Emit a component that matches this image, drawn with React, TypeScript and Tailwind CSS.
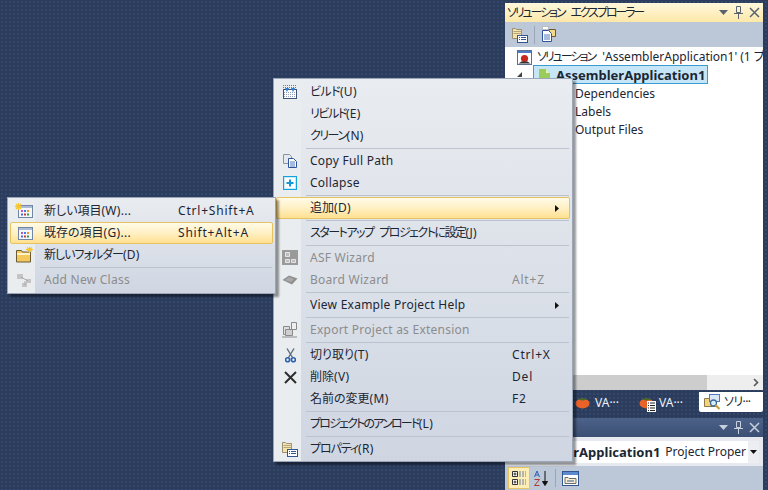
import React from "react";

const uiFont = "font-['Noto_Sans','Noto_Sans_CJK_JP',sans-serif] [font-feature-settings:'palt']";

const BuildIcon = () => (
  <svg width="16" height="16" viewBox="0 0 16 16">
    <path d="M1 1.500h14M1 3.500h14" stroke="#6f7d93" strokeWidth="1" strokeDasharray="1 1" />
    <rect x="1.500" y="5.500" width="13" height="9" fill="#fff" stroke="#3f5577" />
    <path d="M2 8.500h12M2 10.500h12M2 12.500h12" stroke="#8fa0b8" strokeDasharray="1 1" />
    <path d="M3 4h4L5 8zM9 4h4l-2 4z" fill="#2c7fd8" />
  </svg>
);

const CopyIcon = () => (
  <svg width="16" height="16" viewBox="0 0 16 16">
    <path d="M1.500 1.500h6l2 2v7h-8z" fill="#e4e8ef" stroke="#8a93a3" />
    <path d="M6.500 5.500h5l3 3v6h-8z" fill="#fff" stroke="#2f549b" />
    <path d="M8 9h5M8 11h5M8 13h5" stroke="#4f78bd" />
  </svg>
);

const CopyPageIcon = () => (
  <svg width="16" height="17" viewBox="0 0 16 17">
    <path d="M1.500 0.500h6v3h-6z" fill="#fff" stroke="#9a9a9a" strokeDasharray="1 1" />
    <path d="M8 3.500h6.500v7H8z" fill="#f3d98a" stroke="#6b5a32" />
    <path d="M1.500 4.500h6l3 3v8h-9z" fill="#fff" stroke="#2f549b" />
    <path d="M3 9h6M3 11h6M3 13h6" stroke="#4f78bd" />
  </svg>
);

const CollapseIcon = () => (
  <svg width="14" height="14" viewBox="0 0 14 14">
    <rect x="0.500" y="0.500" width="13" height="13" fill="#fff" stroke="#12a3dc" />
    <rect x="1.500" y="1.500" width="11" height="11" fill="none" stroke="#c6e9f7" />
    <path d="M7 3.500v7M3.500 7h7" stroke="#1599d4" strokeWidth="2" />
  </svg>
);

const AsfIcon = () => (
  <svg width="16" height="16" viewBox="0 0 16 16">
    <rect x="0" y="0" width="16" height="15" fill="#9a9a9a" />
    <path d="M3.500 2.500h4v4h-4zM3.500 9.500h4v3h-4zM9.500 9.500h4v3h-4z" fill="#bdbdbd" stroke="#e6e6e6" />
  </svg>
);

const BoardIcon = () => (
  <svg width="16" height="10" viewBox="0 0 16 10">
    <path d="M0.500 5L7 0.500L15.500 3.500L10 9.500z" fill="#8f8f8f" />
    <path d="M3 5l4-3 5 2-3 3z" fill="#a9a9a9" />
  </svg>
);

const ExportIcon = () => (
  <svg width="16" height="16" viewBox="0 0 16 16">
    <path d="M1.500 4.500h6v8h-6z" fill="#dedede" stroke="#8a8a8a" />
    <path d="M3.500 7.500h7v6h-7z" fill="#cfcfcf" stroke="#8a8a8a" />
    <path d="M9.500 0.500h5v7h-5z" fill="#eeeeee" stroke="#8a8a8a" />
    <path d="M0 15h15" stroke="#8a8a8a" />
  </svg>
);

const CutIcon = () => (
  <svg width="11" height="15" viewBox="0 0 11 15">
    <path d="M2 0.500L7.500 9.500M9 0.500L3.500 9.500" stroke="#5f6b7c" strokeWidth="1.400" />
    <circle cx="2.600" cy="11.800" r="2" fill="none" stroke="#2a5fb0" strokeWidth="1.600" />
    <circle cx="8.400" cy="11.800" r="2" fill="none" stroke="#2a5fb0" strokeWidth="1.600" />
  </svg>
);

const DeleteIcon = () => (
  <svg width="13" height="13" viewBox="0 0 13 13">
    <path d="M1 1l11 11M12 1L1 12" stroke="#2d2d2d" strokeWidth="2" />
  </svg>
);

const PropsIcon = () => (
  <svg width="16" height="16" viewBox="0 0 16 16" className="shrink-0">
    <path d="M0.500 1.500h3l1 1h5v9h-9z" fill="#f4e2ac" stroke="#9b8f72" />
    <path d="M1.500 4.500h8M1.500 6.500h8" stroke="#b5a67e" />
    <rect x="5.500" y="8.500" width="10" height="7" fill="#fff" stroke="#34568f" />
    <path d="M7 10.500h1M9 10.500h5M7 12.500h1M9 12.500h5" stroke="#34568f" />
  </svg>
);

const ItemIcon = ({ star }: { star?: boolean }) => (
  <svg width="18" height="16" viewBox="0 0 18 16">
    <rect x="3.500" y="2.500" width="14" height="12" fill="#f5f7fa" stroke="#7286a5" />
    <rect x="4" y="3" width="13" height="2" fill="#a9bbd6" />
    <path d="M6 7h2v2H6z" fill="#c94fc0" />
    <path d="M9 7h2v2H9z" fill="#3f7fe0" />
    <path d="M12 7h2v2h-2z" fill="#e8952f" />
    <path d="M6 10.500h2v2H6z" fill="#3d6fe0" />
    <path d="M9 10.500h2v2H9z" fill="#d93a32" />
    <path d="M12 10.500h2v2h-2z" fill="#2f9e44" />
    {star && <path d="M0 3.500h7M3.500 0v7M1 1l5 5M6 1L1 6" stroke="#f5c52e" strokeWidth="1.300" />}
  </svg>
);

const FolderIcon = () => (
  <svg width="17" height="16" viewBox="0 0 17 16">
    <path d="M0.500 3.500h5l1 1.500h8v10h-14z" fill="#f4c95c" stroke="#6b5a32" />
    <path d="M1 6h13v2H1z" fill="#fff2c4" />
    <path d="M10 2.500h7M13.500 0v6M11 0.500l5 4M16 0.500l-5 4" stroke="#f5c52e" strokeWidth="1.200" />
  </svg>
);

const AddClassIcon = () => (
  <svg width="16" height="15" viewBox="0 0 16 15">
    <path d="M1 1h6v5H1zM10 6h5v4h-5zM6 10h5v4H6z" fill="#c4c4c4" />
    <path d="M5 4l7 4M9 8v4" stroke="#a8a8a8" />
  </svg>
);

const SolutionIcon = () => (
  <svg width="15" height="15" viewBox="0 0 15 15" className="shrink-0">
    <rect x="0.500" y="0.500" width="14" height="14" fill="#fff" stroke="#5b6f8f" />
    <rect x="1" y="1" width="13" height="2" fill="#4d7cc4" />
    <circle cx="7.500" cy="8.500" r="3.600" fill="#c7271d" />
    <path d="M1.500 13.500l3-2h6l3 2z" fill="#333" />
  </svg>
);

const ProjectIcon = () => (
  <svg width="11" height="12" viewBox="0 0 11 12" className="shrink-0">
    <path d="M0 0h7l4 4v8H0z" fill="#9ccc5a" />
    <path d="M7 0l4 4H7z" fill="#e2f2c8" />
  </svg>
);

const TomatoIcon = () => (
  <svg width="15" height="12" viewBox="0 0 15 12" className="shrink-0">
    <ellipse cx="7.500" cy="6.500" rx="7" ry="5" fill="#e8622a" />
    <path d="M3 2.500C6 0.500 9 0.500 12 2.500L7.500 3.500z" fill="#3f6b2a" />
  </svg>
);

const DocBadge = () => (
  <svg width="9" height="11" viewBox="0 0 9 11">
    <rect width="9" height="11" fill="#fff" />
    <path d="M1 2h1M3 2h5M1 4.500h1M3 4.500h5M1 7h1M3 7h5M1 9.500h1M3 9.500h5" stroke="#222" />
  </svg>
);

const ExplorerTabIcon = () => (
  <svg width="17" height="16" viewBox="0 0 17 16" className="shrink-0">
    <path d="M0.500 4.500h5l1 1h5v7h-11z" fill="#f4d27a" stroke="#8d7a48" />
    <rect x="5.500" y="0.500" width="10" height="7" fill="#dbe6f5" stroke="#4d7cc4" />
    <circle cx="9.500" cy="9" r="3" fill="#d8eefb" stroke="#3d6a99" strokeWidth="1.300" />
    <path d="M11.500 11l4 4" stroke="#c79a3a" strokeWidth="2" />
  </svg>
);

const PaneButtons = ({ active }: { active?: boolean }) => {
  const color = active ? "#59636f" : "#c7d0de";
  return (
    <div className="flex items-center gap-[6px] pr-[3px]">
      <svg width="9" height="5" viewBox="0 0 9 5"><path d="M0 0h9L4.500 5z" fill={color} /></svg>
      <svg width="9" height="13" viewBox="0 0 9 13"><path d="M2.500 0.500h4v6h-4zM0 7.500h9M4.500 8v5" fill="none" stroke={color} /></svg>
      <svg width="11" height="11" viewBox="0 0 11 11"><path d="M1 1l9 9M10 1l-9 9" stroke={color} strokeWidth="1.500" /></svg>
    </div>
  );
};

type Row = {
  sep?: boolean;
  icon?: React.ReactNode;
  label?: string;
  hotkey?: string;
  tracking?: string;
  shortcut?: string;
  arrow?: boolean;
  hover?: boolean;
  disabled?: boolean;
};

const latin = "tracking-[0.25px]";

const mainItems: Row[] = [
  { icon: <BuildIcon />, label: "ビルド", hotkey: "(U)", tracking: "tracking-[-0.6px]" },
  { label: "リビルド", hotkey: "(E)", tracking: "tracking-[-1.4px]" },
  { label: "クリーン", hotkey: "(N)", tracking: "tracking-[-1.500px]" },
  { sep: true },
  { icon: <CopyIcon />, label: "Copy Full Path", tracking: latin },
  { icon: <CollapseIcon />, label: "Collapse", tracking: latin },
  { sep: true },
  { label: "追加", hotkey: "(D)", arrow: true, hover: true },
  { sep: true },
  { label: "スタートアップ プロジェクトに設定", hotkey: "(J)", tracking: "tracking-[-1.500px] [word-spacing:4px]" },
  { sep: true },
  { icon: <AsfIcon />, label: "ASF Wizard", tracking: latin, disabled: true },
  { icon: <BoardIcon />, label: "Board Wizard", tracking: latin, shortcut: "Alt+Z", disabled: true },
  { sep: true },
  { label: "View Example Project Help", tracking: latin, arrow: true },
  { sep: true },
  { icon: <ExportIcon />, label: "Export Project as Extension", tracking: latin, disabled: true },
  { sep: true },
  { icon: <CutIcon />, label: "切り取り", hotkey: "(T)", shortcut: "Ctrl+X" },
  { icon: <DeleteIcon />, label: "削除", hotkey: "(V)", shortcut: "Del" },
  { label: "名前の変更", hotkey: "(M)", shortcut: "F2" },
  { sep: true },
  { label: "プロジェクトのアンロード", hotkey: "(L)", tracking: "tracking-[-1.800px]" },
  { sep: true },
  { icon: <PropsIcon />, label: "プロパティ", hotkey: "(R)", tracking: "tracking-[-1.100px]" },
];

const subItems: Row[] = [
  { icon: <ItemIcon star />, label: "新しい項目", hotkey: "(W)...", shortcut: "Ctrl+Shift+A" },
  { icon: <ItemIcon />, label: "既存の項目", hotkey: "(G)...", shortcut: "Shift+Alt+A", hover: true },
  { icon: <FolderIcon />, label: "新しいフォルダー", hotkey: "(D)", tracking: "tracking-[-1px]" },
  { sep: true },
  { icon: <AddClassIcon />, label: "Add New Class", tracking: latin, disabled: true },
];

const Menu = ({ items, labelWidth, className }: { items: Row[]; labelWidth: string; className: string }) => (
  <div className={`absolute border border-[#9ba7b8] bg-gradient-to-b from-[#e9ecf0] to-[#cfd6e2] shadow-[3px_3px_2px_rgba(0,0,0,0.4)] ${className}`}>
    <div className="absolute left-0 top-0 bottom-0 w-[27px] bg-[#e9edf0]" />
    <div className="relative flex flex-col">
      {items.map((item, i) =>
        item.sep ? (
          <div key={i} className="h-[3px] pl-[32px] pr-[3px] flex items-center">
            <div className="h-px w-full bg-[#bcc3ce]" />
          </div>
        ) : (
          <div
            key={i}
            className={`h-[22px] flex items-center mx-[2px] rounded-[2px] ${
              item.hover
                ? "border border-[#e5c365] bg-gradient-to-b from-[#fffbe8] via-[#fff0c4] to-[#ffe08f]"
                : "border border-transparent"
            } ${item.disabled ? "text-[#8c8c8c]" : "text-[#1c2633]"}`}
          >
            <div className="w-[26px] flex justify-center items-center shrink-0">{item.icon}</div>
            <div className={`${labelWidth} pl-[7px] shrink-0 whitespace-nowrap`}>
              <span className={item.tracking}>{item.label}</span>
              {item.hotkey && <span className="tracking-[0.3px]">{item.hotkey}</span>}
            </div>
            <div className="flex-1 whitespace-nowrap tracking-[0.8px]">{item.shortcut}</div>
            {item.arrow && (
              <svg width="4" height="7" viewBox="0 0 4 7" className="mr-[10px]">
                <path d="M0 0l4 3.500L0 7z" fill="#111" />
              </svg>
            )}
          </div>
        )
      )}
    </div>
  </div>
);

export default function App() {
  return (
    <div className={`relative w-[768px] h-[490px] overflow-hidden flex justify-end pr-[5px] pt-[3px] text-[12px] leading-[16px] bg-[#2b3c5d] bg-[radial-gradient(#34486c_0.8px,transparent_0.9px)] bg-[length:4px_4px] ${uiFont}`}>
      <div className="w-[258px] flex flex-col">
        {/* solution explorer */}
        <div className="h-[19px] flex items-center justify-between pl-[2px] bg-gradient-to-b from-[#fff8dc] to-[#fde8a8] text-[#1c2633]">
          <span className="tracking-[-2.100px] [word-spacing:5px]">ソリューション エクスプローラー</span>
          <PaneButtons active />
        </div>
        <div className="h-[25px] flex items-center pl-[7px] gap-[6px] bg-[#bcc7d8]">
          <PropsIcon />
          <div className="w-px h-[18px] bg-[#9aa6b8]" />
          <CopyPageIcon />
        </div>
        <div className="h-[328px] bg-white pt-[1px] text-[#1c2633] overflow-hidden">
          <div className="h-[18px] flex items-center pl-[12px] gap-[5px] whitespace-nowrap">
            <SolutionIcon />
            <span><span className="tracking-[-2px] mr-[4px]">ソリューション</span> 'AssemblerApplication1' (1 プ</span>
          </div>
          <div className="flex items-center h-[19px] -mt-px pl-[12px]">
            <svg width="5" height="5" viewBox="0 0 5 5" className="shrink-0"><path d="M5 0v5H0z" fill="#444" /></svg>
            <div className="h-[19px] ml-[11px] w-[175px] flex items-center gap-[6px] pl-[5px] border border-[#3a9bd0] bg-[#c6e6f7] font-bold text-[13px]">
              <ProjectIcon />
              <span>AssemblerApplication1</span>
            </div>
          </div>
          <div className="pl-[70px] pt-px">
            <div className="h-[18px] flex items-center">Dependencies</div>
            <div className="h-[18px] flex items-center">Labels</div>
            <div className="h-[18px] flex items-center">Output Files</div>
          </div>
        </div>
        <div className="h-[15px] flex bg-[#eeeeee]">
          <div className="w-[202px] bg-[#cdcdcd]" />
          <div className="flex-1 flex justify-end items-center pr-[4px]">
            <svg width="6" height="9" viewBox="0 0 6 9"><path d="M1 1l3.500 3.500L1 8" fill="none" stroke="#555" strokeWidth="1.600" /></svg>
          </div>
        </div>
        {/* tabs */}
        <div className="h-[22px] mt-[2px] flex items-center justify-end text-[#eef2f8]">
          <div className="flex items-center gap-[5px] w-[64px]">
            <TomatoIcon />
            <span>VA···</span>
          </div>
          <div className="flex items-center gap-[5px] w-[60px] relative">
            <TomatoIcon />
            <div className="absolute left-[8px] top-[6px]"><DocBadge /></div>
            <span>VA···</span>
          </div>
          <div className="w-[64px] h-[20px] -mt-[2px] flex items-center gap-[3px] pl-[5px] bg-white text-[#1c2633] rounded-b-[2px]">
            <ExplorerTabIcon />
            <span className="tracking-[-0.6px]">ソリ···</span>
          </div>
        </div>
        {/* properties */}
        <div className="h-[19px] mt-[4px] flex items-center justify-end bg-gradient-to-b from-[#4d6289] to-[#3b4f74]">
          <PaneButtons />
        </div>
        <div className="h-[29px] bg-[#e6e9ef] flex items-center px-[4px]">
          <div className="flex-1 h-[22px] bg-white flex items-center justify-end whitespace-nowrap overflow-hidden text-[#1c2633]">
            <span className="font-bold text-[13px]">rApplication1</span>
            <span className="ml-[5px]">Project Proper</span>
            <div className="w-[11px] h-full ml-[2px] bg-[#eceef2] flex items-center justify-center">
              <svg width="7" height="4" viewBox="0 0 7 4"><path d="M0 0h7L3.500 4z" fill="#111" /></svg>
            </div>
          </div>
        </div>
        <div className="flex-1 bg-[#bcc7d8] flex items-center pl-[3px] gap-[3px]">
          <div className="w-[22px] h-[22px] border border-[#e5c365] bg-[#fdeeb8] flex items-center justify-center">
            <svg width="16" height="16" viewBox="0 0 16 16">
              <path d="M1.500 1.500h5v5h-5zM1.500 9.500h5v5h-5z" fill="#fff" stroke="#333" />
              <path d="M2.500 4h3M4 2.500v3M2.500 12h3M4 10.500v3" stroke="#333" />
              <path d="M8 2h7M8 4h7M8 6h7M8 10h7M8 12h7M8 14h7" stroke="#6b7c94" strokeDasharray="2 1" />
            </svg>
          </div>
          <svg width="16" height="17" viewBox="0 0 16 17">
            <path d="M12 1v13M9.500 11.500L12 15.500l2.500-4z" fill="#111" stroke="#111" />
            <path d="M1.500 7L4 1l2.500 6M2.500 5h3" fill="none" stroke="#2a5fb0" />
            <path d="M1.500 9.500h5l-5 6h5" fill="none" stroke="#b03a2e" />
          </svg>
          <div className="w-px h-[18px] bg-[#9aa6b8] mx-[3px]" />
          <svg width="17" height="15" viewBox="0 0 17 15">
            <rect x="0.500" y="0.500" width="16" height="14" fill="#fff" stroke="#34568f" />
            <rect x="1" y="1" width="15" height="3" fill="#5b8ad0" />
            <path d="M3 6.500h3l1 1h7v5H3z" fill="#f7efd2" stroke="#6b6b6b" />
            <path d="M5 10h7" stroke="#34568f" />
          </svg>
        </div>
      </div>

      <Menu items={mainItems} labelWidth="w-[209px]" className="left-[273px] top-[78px] w-[300px] pt-[2px] pb-[1px]" />
      <Menu items={subItems} labelWidth="w-[141px]" className="left-[7px] top-[197px] w-[269px] py-[2px]" />
    </div>
  );
}
